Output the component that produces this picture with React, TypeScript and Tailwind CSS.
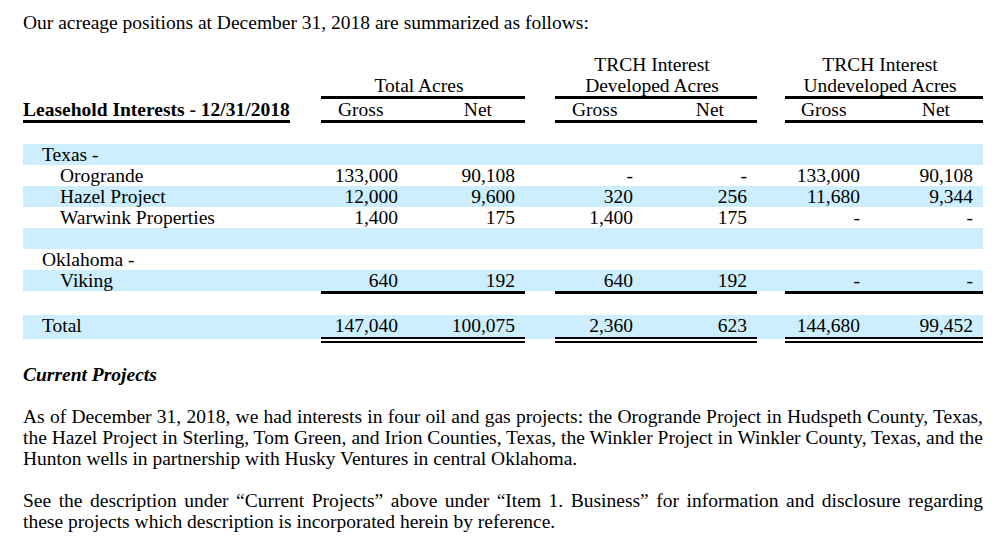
import React from "react"

type Row = {
  label?: string
  level?: "state" | "item"
  vals?: string[]
  shade: boolean
  rule?: "single" | "double"
}

const rows: Row[] = [
  { label: "Texas -", level: "state", shade: true },
  { label: "Orogrande", level: "item", vals: ["133,000", "90,108", "-", "-", "133,000", "90,108"], shade: false },
  { label: "Hazel Project", level: "item", vals: ["12,000", "9,600", "320", "256", "11,680", "9,344"], shade: true },
  { label: "Warwink Properties", level: "item", vals: ["1,400", "175", "1,400", "175", "-", "-"], shade: false },
  { shade: true },
  { label: "Oklahoma -", level: "state", shade: false },
  { label: "Viking", level: "item", vals: ["640", "192", "640", "192", "-", "-"], shade: true, rule: "single" },
  { shade: false },
  { label: "Total", level: "state", vals: ["147,040", "100,075", "2,360", "623", "144,680", "99,452"], shade: true, rule: "double" },
]

const cols = "grid grid-cols-[298px_87px_117px_30px_88px_114px_28px_85px_113px]"

function DataRow({ row }: { row: Row }) {
  const bg = row.shade ? "bg-[#cceeff]" : ""
  // plain cells (label + spacers) keep the row height; number cells carry the rules
  const plainH = row.rule === "double" ? "h-[24px]" : "h-[21px]"
  let numCls = "h-[21px]"
  if (row.rule === "single") numCls = "h-[24px] border-b-[3px] border-black"
  if (row.rule === "double") numCls = "h-[28px] border-b-[6px] border-double border-black bg-clip-padding"

  const v = row.vals ?? ["", "", "", "", "", ""]
  const cell = (i: number) => (
    <div className={`${numCls} ${bg} text-right pr-[10px] whitespace-nowrap`}>{v[i]}</div>
  )
  const spacer = <div className={`${plainH} ${bg}`} />

  return (
    <div className={`${cols} items-start`}>
      <div className={`${plainH} ${bg} whitespace-nowrap ${row.level === "item" ? "pl-[37px]" : "pl-[19px]"}`}>
        {row.label}
      </div>
      {cell(0)}
      {cell(1)}
      {spacer}
      {cell(2)}
      {cell(3)}
      {spacer}
      {cell(4)}
      {cell(5)}
    </div>
  )
}

export default function App() {
  return (
    <main className="min-h-screen bg-white font-['Liberation_Serif',serif] text-[19.5px] leading-[21px] text-black">
      <div className="w-[960px] ml-[23px] pt-[12px]">
        <p>Our acreage positions at December 31, 2018 are summarized as follows:</p>

        {/* Acreage table */}
        <div className="mt-[21px]">
          <div className={cols}>
            <div />
            <div className="col-span-2 flex flex-col justify-end border-b-[3px] border-black text-center pr-2">
              <span>Total Acres</span>
            </div>
            <div />
            <div className="col-span-2 border-b-[3px] border-black text-center pr-2">
              TRCH Interest
              <br />
              Developed Acres
            </div>
            <div />
            <div className="col-span-2 border-b-[3px] border-black text-center pr-2">
              TRCH Interest
              <br />
              Undeveloped Acres
            </div>

            <div className="whitespace-nowrap">
              <span className="inline-block border-b-[3px] border-black font-bold">Leasehold Interests - 12/31/2018</span>
            </div>
            <div className="col-span-2 flex justify-between pl-[17px] pr-[33px] border-b-[3px] border-black">
              <span>Gross</span>
              <span>Net</span>
            </div>
            <div />
            <div className="col-span-2 flex justify-between pl-[17px] pr-[33px] border-b-[3px] border-black">
              <span>Gross</span>
              <span>Net</span>
            </div>
            <div />
            <div className="col-span-2 flex justify-between pl-[16px] pr-[33px] border-b-[3px] border-black">
              <span>Gross</span>
              <span>Net</span>
            </div>
          </div>

          <div className="h-[21px]" />

          {rows.map((r, i) => (
            <DataRow key={i} row={r} />
          ))}
        </div>

        <p className="mt-[21px] font-bold italic">Current Projects</p>

        <p className="mt-[21px] text-justify">
          As of December 31, 2018, we had interests in four oil and gas projects: the Orogrande Project in Hudspeth County, Texas,
          the Hazel Project in Sterling, Tom Green, and Irion Counties, Texas, the Winkler Project in Winkler County, Texas, and the
          Hunton wells in partnership with Husky Ventures in central Oklahoma.
        </p>

        <p className="mt-[21px] text-justify">
          See the description under “Current Projects” above under “Item 1. Business” for information and disclosure regarding
          these projects which description is incorporated herein by reference.
        </p>
      </div>
    </main>
  )
}
